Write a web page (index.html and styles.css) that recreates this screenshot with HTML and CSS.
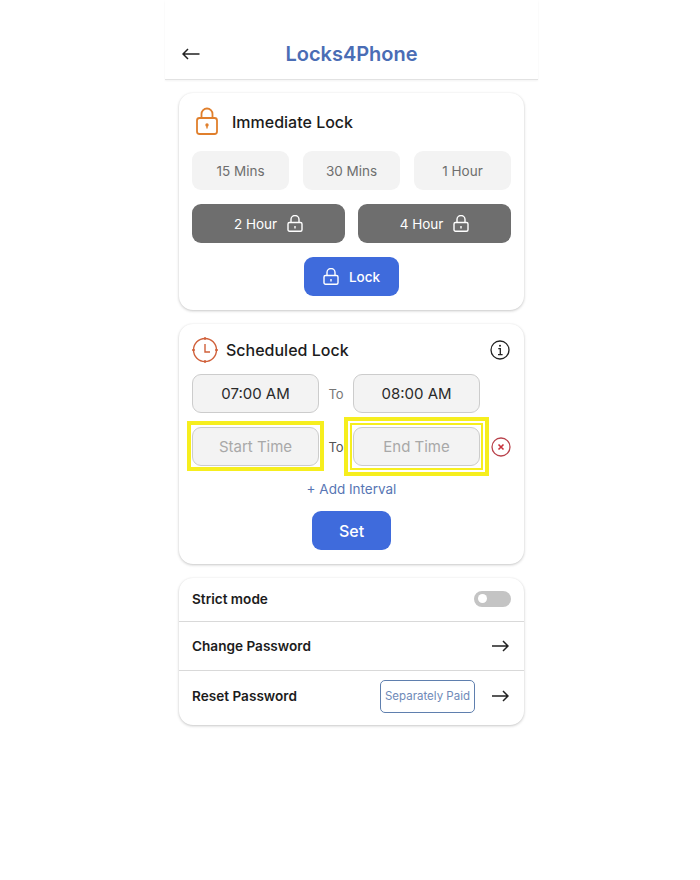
FILE: index.html
```html
<!DOCTYPE html>
<html lang="en">
<head>
  <meta charset="UTF-8">
  <meta name="viewport" content="width=device-width, initial-scale=1.0">
  <title>Locks4Phone</title>
  <link rel="stylesheet" href="styles.css">
</head>
<body>
<div class="screen">
  <header class="topbar">
    <svg class="back-icon" width="18" height="12" viewBox="0 0 18 12"><path d="M17.5 6H1M6 1 1 6l5 5" fill="none" stroke="#222" stroke-width="1.5"/></svg>
    <h1 class="app-title">Locks4Phone</h1>
  </header>

  <main class="content">
    <section class="card">
      <div class="card-head head-immediate">
        <svg class="lock-icon" width="24" height="30" viewBox="0 0 24 30"><path d="M6.5 12V8a5.5 5.5 0 0 1 11 0v4" fill="none" stroke="#e07f2c" stroke-width="1.8"/><rect x="2" y="12" width="20" height="16" rx="2.5" fill="none" stroke="#e07f2c" stroke-width="1.8"/><circle cx="12" cy="19" r="1.7" fill="#e07f2c"/><path d="M12 19v3.5" stroke="#e07f2c" stroke-width="1.4"/></svg>
        <h2 class="card-title">Immediate Lock</h2>
      </div>
      <div class="btn-row">
        <button class="btn btn-light">15 Mins</button>
        <button class="btn btn-light">30 Mins</button>
        <button class="btn btn-light">1 Hour</button>
      </div>
      <div class="btn-row row-pair">
        <button class="btn btn-dark">2 Hour
          <svg width="16" height="17" viewBox="0 0 16 17"><path d="M4 8V4.500a4 4 0 0 1 8 0V8M8 11v2.500" fill="none" stroke="#fff" stroke-width="1.400"/><rect x="1" y="7.500" width="14" height="8.800" rx="1.500" fill="none" stroke="#fff" stroke-width="1.400"/></svg>
        </button>
        <button class="btn btn-dark">4 Hour
          <svg width="16" height="17" viewBox="0 0 16 17"><path d="M4 8V4.500a4 4 0 0 1 8 0V8M8 11v2.500" fill="none" stroke="#fff" stroke-width="1.400"/><rect x="1" y="7.500" width="14" height="8.800" rx="1.500" fill="none" stroke="#fff" stroke-width="1.400"/></svg>
        </button>
      </div>
      <div class="btn-center">
        <button class="btn btn-primary btn-lock">
          <svg width="16" height="17" viewBox="0 0 16 17"><path d="M4 8V4.500a4 4 0 0 1 8 0V8M8 11v2.500" fill="none" stroke="#fff" stroke-width="1.400"/><rect x="1" y="7.500" width="14" height="8.800" rx="1.500" fill="none" stroke="#fff" stroke-width="1.400"/></svg>
          Lock
        </button>
      </div>
    </section>

    <section class="card">
      <div class="card-head head-scheduled">
        <svg width="26" height="26" viewBox="0 0 26 26"><circle cx="13" cy="13" r="11.500" fill="none" stroke="#d0603a" stroke-width="1.400"/><path d="M13 7v8h5M13 0v3M13 23v3M0 13h3M23 13h3" fill="none" stroke="#d0603a" stroke-width="1.400"/></svg>
        <h2 class="card-title">Scheduled Lock</h2>
        <svg class="info-icon" width="20" height="20" viewBox="0 0 20 20"><circle cx="10" cy="10" r="9" fill="none" stroke="#222" stroke-width="1.300"/><circle cx="10" cy="5.800" r="1" fill="#222"/><path d="M8.300 8.700H10.300V14.500M8 14.700h4.600" fill="none" stroke="#222" stroke-width="1.300"/></svg>
      </div>
      <div class="time-row">
        <button class="time-btn">07:00 AM</button>
        <span class="to-label">To</span>
        <button class="time-btn">08:00 AM</button>
      </div>
      <div class="time-row">
        <button class="time-btn time-empty mark-start">Start Time</button>
        <span class="to-label to-dark">To</span>
        <button class="time-btn time-empty mark-end">End Time</button>
        <svg class="remove-icon" width="20" height="20" viewBox="0 0 20 20"><circle cx="10" cy="10" r="9" fill="none" stroke="#b9434c" stroke-width="1.300"/><path d="M7.500 7.500l5 5M12.500 7.500l-5 5" stroke="#c8323c" stroke-width="1.600"/></svg>
      </div>
      <div class="add-interval">+ Add Interval</div>
      <div class="btn-center">
        <button class="btn btn-primary btn-set">Set</button>
      </div>
    </section>

    <section class="card card-list">
      <div class="list-row row-strict">
        <span class="row-label">Strict mode</span>
        <span class="toggle"><span class="toggle-knob"></span></span>
      </div>
      <div class="list-row row-change">
        <span class="row-label">Change Password</span>
        <svg width="18" height="12" viewBox="0 0 18 12"><path d="M1 6h15.500M12 1l5 5-5 5" fill="none" stroke="#222" stroke-width="1.500"/></svg>
      </div>
      <div class="list-row row-reset">
        <span class="row-label">Reset Password</span>
        <span class="paid-chip">Separately Paid</span>
        <svg width="18" height="12" viewBox="0 0 18 12"><path d="M1 6h15.500M12 1l5 5-5 5" fill="none" stroke="#222" stroke-width="1.500"/></svg>
      </div>
    </section>
  </main>
</div>
</body>
</html>
```
FILE: styles.css
```css
*, *::before, *::after {
  margin: 0;
  padding: 0;
  box-sizing: border-box;
}

body {
  font-family: "Inter", "Liberation Sans", sans-serif;
  background: #fff;
  color: #1c1c1c;
}

.screen {
  width: 373px;
  margin-left: 165px;
}

.topbar {
  height: 80px;
  padding: 28px 17px 0;
  display: grid;
  grid-template-columns: 1fr auto 1fr;
  align-items: center;
  border-bottom: 1px solid #e2e2e2;
  box-shadow: 0 1px 2px rgba(0, 0, 0, 0.05);
}

.app-title {
  font-size: 20px;
  font-weight: 600;
  color: #4a6db5;
}

.content {
  padding: 13px 14px;
  display: flex;
  flex-direction: column;
  gap: 14px;
}

.card {
  background: #fff;
  border-radius: 14px;
  padding: 0 13px 14px;
  box-shadow: 0 1px 3px rgba(0, 0, 0, 0.22), 0 0 2px rgba(0, 0, 0, 0.04);
}

.card-head {
  display: flex;
  align-items: center;
}

.head-immediate {
  height: 58px;
  padding-left: 3px;
  gap: 13px;
}

.lock-icon {
  margin-bottom: 2px;
}

.head-scheduled {
  height: 50px;
  padding-top: 1px;
  gap: 8px;
}

.card-title {
  font-size: 16px;
  font-weight: 500;
  color: #1c1c1c;
}

.info-icon {
  margin-left: auto;
  margin-right: 1px;
}

.btn-row {
  display: flex;
  gap: 14px;
  margin-bottom: 14px;
}

.row-pair {
  gap: 13px;
}

.btn {
  height: 39px;
  flex: 1;
  border: none;
  border-radius: 9px;
  font-family: inherit;
  font-size: 13.5px;
  display: flex;
  align-items: center;
  justify-content: center;
  gap: 10px;
}

.btn-light {
  background: #f3f3f3;
  color: #6e6e6e;
}

.btn-dark {
  background: #6e6e6e;
  color: #fff;
}

.btn-primary {
  background: #3f6bdc;
  color: #fff;
  font-weight: 500;
}

.btn-center {
  display: flex;
  justify-content: center;
}

.btn-lock {
  flex: none;
  width: 95px;
}

.btn-set {
  flex: none;
  width: 79px;
  font-size: 16px;
}

.time-row {
  display: flex;
  align-items: center;
  margin-bottom: 14px;
}

.time-btn {
  width: 127px;
  height: 39px;
  border: 1px solid #cccccc;
  border-radius: 9px;
  background: #f3f3f3;
  font-family: inherit;
  font-size: 15px;
  color: #2a2a2a;
  position: relative;
}

.time-empty {
  color: #a8a8a8;
}

.to-label {
  width: 34px;
  text-align: center;
  font-size: 13px;
  color: #777;
}

.to-dark {
  color: #555;
}

/* yellow annotation frames drawn on top of the screenshot */
.mark-start::after {
  content: "";
  position: absolute;
  inset: -7px -6px -6px;
  border: 4px solid #f6ee1e;
}

.mark-end::before {
  content: "";
  position: absolute;
  inset: -11px -10px;
  border: 4px solid #f6ee1e;
}

.mark-end::after {
  content: "";
  position: absolute;
  inset: -5px -4px;
  border: 2px solid #f6ee1e;
}

.remove-icon {
  margin-left: 11px;
}

.add-interval {
  text-align: center;
  font-size: 13.5px;
  color: #5876b4;
  margin: 15px 0 14px;
  line-height: 16px;
}

.card-list {
  padding: 0;
}

.list-row {
  display: flex;
  align-items: center;
  padding: 0 15px 0 13px;
  border-bottom: 1px solid #d9d9d9;
}

.list-row:last-child {
  border-bottom: none;
}

.row-strict {
  height: 44px;
  padding-bottom: 2px;
}

.row-change {
  height: 49px;
}

.row-reset {
  height: 54px;
  padding-bottom: 4px;
}

.row-label {
  font-size: 13.6px;
  font-weight: 600;
  color: #1c1c1c;
  margin-right: auto;
}

.toggle {
  width: 37px;
  height: 16px;
  border-radius: 8px;
  background: #c4c4c4;
  margin-right: -2px;
  display: flex;
  align-items: center;
  padding-left: 4px;
}

.toggle-knob {
  width: 9px;
  height: 9px;
  border-radius: 50%;
  background: #fff;
}

.paid-chip {
  width: 95px;
  height: 33px;
  border: 1px solid #5f7fae;
  border-radius: 5px;
  font-size: 11.5px;
  color: #6f8ab8;
  display: flex;
  align-items: center;
  justify-content: center;
  margin-right: 16px;
}
```
